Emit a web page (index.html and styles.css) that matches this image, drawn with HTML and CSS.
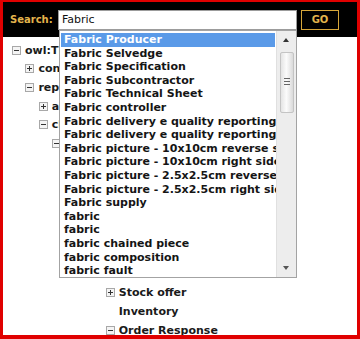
FILE: index.html
```html
<!DOCTYPE html>
<html lang="en">
  <head>
    <meta charset="UTF-8" />
    <meta name="viewport" content="width=device-width, initial-scale=1.0" />
    <title>Ontology Search</title>
    <link rel="stylesheet" href="styles.css">
  </head>
  <body>
    <div class="frame">
      <div class="header">
        <label class="search-label" for="search">Search:</label>
        <input id="search" class="search-input" type="text" value="Fabric" />
        <button class="go-btn">GO</button>
      </div>

      <ul class="tree">
        <li>
          <div class="node"><span class="toggle minus"></span>owl:Thing</div>
          <ul>
            <li><div class="node"><span class="toggle plus"></span>concept</div></li>
            <li>
              <div class="node"><span class="toggle minus"></span>representation</div>
              <ul>
                <li><div class="node"><span class="toggle plus"></span>attribute</div></li>
                <li>
                  <div class="node"><span class="toggle minus"></span>class</div>
                  <ul>
                    <li>
                      <div class="node"><span class="toggle minus"></span>Doc</div>
                      <ul>
                        <li>
                          <div class="node hidden"><span class="toggle minus"></span>Fabric</div>
                          <ul>
                            <li>
                              <div class="node hidden"><span class="toggle minus"></span>Order</div>
                              <ul>
                                <li>
                                  <div class="node hidden"><span class="toggle minus"></span>Sheet</div>
                                  <ul>
                                    <li><div class="node hidden"><span class="toggle plus"></span>Item</div></li>
                                    <li><div class="node hidden"><span class="toggle plus"></span>Item</div></li>
                                    <li><div class="node hidden"><span class="toggle plus"></span>Item</div></li>
                                    <li><div class="node hidden"><span class="toggle plus"></span>Item</div></li>
                                    <li><div class="node"><span class="toggle plus"></span>Stock offer</div></li>
                                    <li><div class="node"><span class="toggle empty"></span>Inventory</div></li>
                                    <li><div class="node"><span class="toggle minus"></span>Order Response</div></li>
                                  </ul>
                                </li>
                              </ul>
                            </li>
                          </ul>
                        </li>
                      </ul>
                    </li>
                  </ul>
                </li>
              </ul>
            </li>
          </ul>
        </li>
      </ul>

      <div class="suggestions">
        <div class="options">
          <div class="option active">Fabric Producer</div>
          <div class="option">Fabric Selvedge</div>
          <div class="option">Fabric Specification</div>
          <div class="option">Fabric Subcontractor</div>
          <div class="option">Fabric Technical Sheet</div>
          <div class="option">Fabric controller</div>
          <div class="option">Fabric delivery e quality reporting</div>
          <div class="option">Fabric delivery e quality reporting</div>
          <div class="option">Fabric picture - 10x10cm reverse side</div>
          <div class="option">Fabric picture - 10x10cm right side</div>
          <div class="option">Fabric picture - 2.5x2.5cm reverse side</div>
          <div class="option">Fabric picture - 2.5x2.5cm right side</div>
          <div class="option">Fabric supply</div>
          <div class="option">fabric</div>
          <div class="option">fabric</div>
          <div class="option">fabric chained piece</div>
          <div class="option">fabric composition</div>
          <div class="option">fabric fault</div>
        </div>
        <div class="scrollbar">
          <div class="arrow up"></div>
          <div class="thumb"><span class="grip"></span></div>
          <div class="track"></div>
          <div class="arrow down"></div>
        </div>
      </div>
    </div>
  </body>
</html>
```

FILE: styles.css
```css
body {
  margin: 0;
  font-family: "DejaVu Sans", Verdana, sans-serif;
  background-color: white;
}

.frame {
  position: relative;
  width: 360px;
  height: 339px;
  box-sizing: border-box;
  border-style: solid;
  border-color: #e00000;
  border-width: 2px 3px 4px 3px;
  background-color: white;
  overflow: hidden;
}

.header {
  display: flex;
  align-items: center;
  height: 35px;
  padding-left: 7px;
  background-color: #000;
}

.search-label {
  width: 43px;
  margin-right: 5px;
  font-size: 10px;
  font-weight: bold;
  color: #e4b44c;
}

.search-input {
  width: 239px;
  height: 20px;
  box-sizing: border-box;
  margin: 0;
  padding: 0 3px;
  border: 1px solid #9c9c9c;
  font-family: "DejaVu Sans", Verdana, sans-serif;
  font-size: 11px;
  color: #111;
  outline: none;
}

.go-btn {
  width: 38px;
  height: 20px;
  margin-left: 4px;
  padding: 0;
  border: 1px solid #d6a63a;
  background-color: #000;
  color: #e4b44c;
  font-family: "DejaVu Sans", Verdana, sans-serif;
  font-size: 10px;
  font-weight: bold;
}

/* tree */
.tree,
.tree ul {
  list-style: none;
  margin: 0;
  padding: 0;
}

.tree {
  padding: 3.7px 0 0 9px;
}

.tree ul {
  padding-left: 13.4px;
}

.node {
  display: flex;
  align-items: center;
  height: 18.7px;
  font-size: 11px;
  font-weight: bold;
  color: #1a1a1a;
  white-space: nowrap;
}

/* rows that sit fully under the open dropdown */
.node.hidden {
  visibility: hidden;
}

.toggle {
  position: relative;
  width: 7px;
  height: 7px;
  margin-right: 4px;
  border: 1px solid #a8a8a8;
  background-color: #f4f4f4;
  flex-shrink: 0;
}

.toggle.empty {
  border-color: transparent;
  background: none;
}

.toggle.minus::before,
.toggle.plus::before {
  content: "";
  position: absolute;
  left: 1px;
  top: 3px;
  width: 5px;
  height: 1px;
  background-color: #333;
}

.toggle.plus::after {
  content: "";
  position: absolute;
  left: 3px;
  top: 1px;
  width: 1px;
  height: 5px;
  background-color: #333;
}

/* autocomplete dropdown */
.suggestions {
  position: absolute;
  left: 56px;
  top: 28px;
  width: 238px;
  height: 248px;
  box-sizing: border-box;
  display: flex;
  border: 1px solid #a3a3a3;
  background-color: white;
}

.options {
  flex: 1;
  min-width: 0;
  padding: 2px 1px;
  overflow: hidden;
}

.option {
  height: 13.6px;
  line-height: 13.6px;
  padding: 0 3px;
  font-size: 11px;
  font-weight: bold;
  color: #151515;
  white-space: nowrap;
}

.option.active {
  background-color: #5a9ae8;
  color: white;
}

.scrollbar {
  display: flex;
  flex-direction: column;
  align-items: center;
  width: 19px;
  background-color: #ededed;
  border-left: 1px solid #e0e0e0;
}

.arrow {
  height: 20px;
  width: 100%;
  position: relative;
}

.arrow::before {
  content: "";
  position: absolute;
  left: 6px;
  border-left: 3px solid transparent;
  border-right: 3px solid transparent;
}

.arrow.up::before {
  top: 7px;
  border-bottom: 4px solid #333;
}

.arrow.down::before {
  bottom: 7px;
  border-top: 4px solid #555;
}

.thumb {
  position: relative;
  width: 14px;
  height: 61px;
  margin-top: 1px;
  box-sizing: border-box;
  border: 1px solid #c4c4c4;
  border-radius: 2px;
  background: linear-gradient(to right, #e4e4e4, #fbfbfb 45%, #dadada);
}

.grip {
  position: absolute;
  left: 3px;
  top: 25px;
  width: 6px;
  height: 7px;
  background: repeating-linear-gradient(to bottom, #666 0, #666 1px, transparent 1px, transparent 3px);
}

.track {
  flex: 1;
}
```
